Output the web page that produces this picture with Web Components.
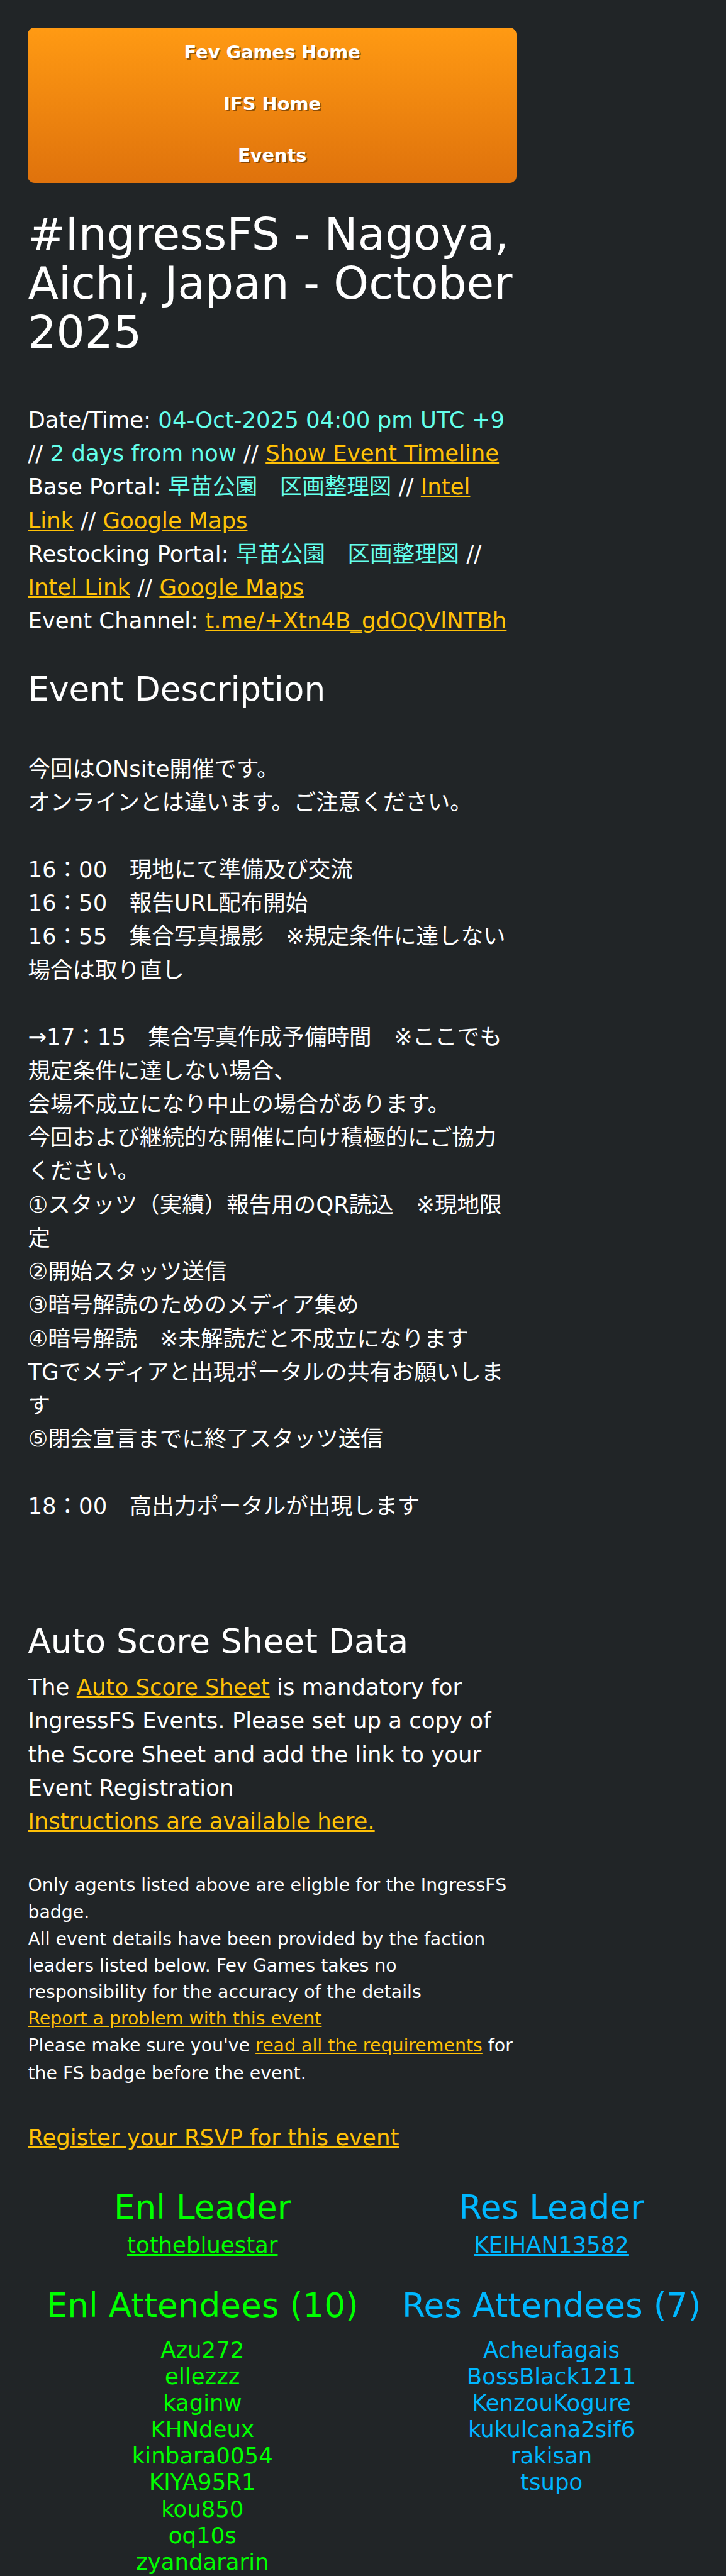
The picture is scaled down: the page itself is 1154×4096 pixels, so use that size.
<!DOCTYPE html>
<html lang="en">
<head>
<meta charset="utf-8">
<title>#IngressFS - Nagoya, Aichi, Japan - October 2025</title>
<style>

  /* 1rem is one layout unit: the page is 520 units wide */
  html {
    font-size: 2.2192px;
    background: #212527;
  }

  body {
    margin: 0;
    height: 4096px;
    overflow: hidden;
    color: #ffffff;
    background: #212527;
    font-family: "DejaVu Sans", "Noto Sans CJK JP", sans-serif;
  }

</style>
</head>
<body>

<event-page>

  <event-nav slot="nav">
    <nav-item>Fev Games Home</nav-item>
    <nav-item>IFS Home</nav-item>
    <nav-item>Events</nav-item>
  </event-nav>

  <event-title>#IngressFS - Nagoya,<br>Aichi, Japan - October<br>2025</event-title>

  <event-text class="details">
    Date/Time: <text-value>04-Oct-2025 04:00 pm UTC +9</text-value><br>
    // <text-value>2 days from now</text-value> // <text-link>Show Event Timeline</text-link><br>
    Base Portal: <text-value>早苗公園　区画整理図</text-value> // <text-link>Intel<br>Link</text-link> // <text-link>Google Maps</text-link><br>
    Restocking Portal: <text-value>早苗公園　区画整理図</text-value> //<br>
    <text-link>Intel Link</text-link> // <text-link>Google Maps</text-link><br>
    Event Channel: <text-link>t.me/+Xtn4B_gdOQVlNTBh</text-link>
  </event-text>

  <event-section heading="Event Description" class="description">
    <event-text>
      今回はONsite開催です。<br>
      オンラインとは違います。ご注意ください。<br>
      <br>
      16：00　現地にて準備及び交流<br>
      16：50　報告URL配布開始<br>
      16：55　集合写真撮影　※規定条件に達しない<br>場合は取り直し<br>
      <br>
      →17：15　集合写真作成予備時間　※ここでも<br>規定条件に達しない場合、<br>
      会場不成立になり中止の場合があります。<br>
      今回および継続的な開催に向け積極的にご協力<br>ください。<br>
      ①スタッツ（実績）報告用のQR読込　※現地限<br>定<br>
      ②開始スタッツ送信<br>
      ③暗号解読のためのメディア集め<br>
      ④暗号解読　※未解読だと不成立になります<br>
      TGでメディアと出現ポータルの共有お願いしま<br>す<br>
      ⑤閉会宣言までに終了スタッツ送信<br>
      <br>
      18：00　高出力ポータルが出現します
    </event-text>
  </event-section>

  <event-section heading="Auto Score Sheet Data" class="score">
    <event-text>
      The <text-link>Auto Score Sheet</text-link> is mandatory for<br>
      IngressFS Events. Please set up a copy of<br>
      the Score Sheet and add the link to your<br>
      Event Registration<br>
      <text-link>Instructions are available here.</text-link>
    </event-text>
  </event-section>

  <event-notes>
    <p>Only agents listed above are eligble for the IngressFS<br>badge.</p>
    <p>All event details have been provided by the faction<br>leaders listed below. Fev Games takes no<br>responsibility for the accuracy of the details</p>
    <p><text-link>Report a problem with this event</text-link></p>
    <p>Please make sure you've <text-link>read all the requirements</text-link> for<br>the FS badge before the event.</p>
  </event-notes>

  <event-text class="register"><text-link>Register your RSVP for this event</text-link></event-text>

  <faction-column slot="factions" faction="Enl" count="10" leader="tothebluestar"
    agents="Azu272 ellezzz kaginw KHNdeux kinbara0054 KIYA95R1 kou850 oq10s zyandararin"></faction-column>
  <faction-column slot="factions" faction="Res" count="7" leader="KEIHAN13582"
    agents="Acheufagais BossBlack1211 KenzouKogure kukulcana2sif6 rakisan tsupo"></faction-column>

</event-page>

<script>

class BaseElement extends HTMLElement {

  constructor () {

    super();

    this.attachShadow( { mode: 'open' } );

  }

  connectedCallback () {

    this.shadowRoot.innerHTML = this.render();

  }

}

class EventPage extends BaseElement {

  render () {

    return `
      <style>

        :host {
          display: flex;
          flex-direction: column;
          padding: 20rem 0 0 20rem;
        }

        main {
          width: 350rem;
          display: flex;
          flex-direction: column;
        }

        ::slotted( event-title ) { margin-top: 19.6rem; }
        ::slotted( .details ) { margin-top: 33.2rem; }
        ::slotted( .description ) { margin-top: 24rem; --gap: 31.8rem; }
        ::slotted( .score ) { margin-top: 71.8rem; --gap: 7.6rem; }
        ::slotted( event-notes ) { margin-top: 24rem; }
        ::slotted( .register ) { margin-top: 24.2rem; }

        .factions {
          width: 500rem;
          margin-top: 25rem;
          display: grid;
          grid-template-columns: 1fr 1fr;
        }

      </style>

      <main>
        <slot name="nav"></slot>
        <slot></slot>
      </main>
      <div class="factions"><slot name="factions"></slot></div>
    `;

  }

}

class EventNav extends BaseElement {

  render () {

    return `
      <style>

        :host {
          display: flex;
          flex-direction: column;
          height: 111rem;
          border-radius: 5rem;
          background: linear-gradient( to bottom, #ff9a13, #df720c );
        }

      </style>

      <slot></slot>
    `;

  }

}

class NavItem extends BaseElement {

  render () {

    return `
      <style>

        :host {
          flex: 1;
          box-sizing: border-box;
          padding-bottom: 2rem;
          display: flex;
          align-items: center;
          justify-content: center;
          font-size: 13rem;
          font-weight: 700;
          text-shadow: 1rem 1rem 0 rgba( 0, 0, 0, 0.42 );
        }

      </style>

      <slot></slot>
    `;

  }

}

class EventTitle extends BaseElement {

  render () {

    return `
      <style>

        :host { display: block; }

        h1 {
          margin: 0;
          font-size: 32rem;
          font-weight: 400;
          line-height: 35rem;
          white-space: nowrap;
        }

      </style>

      <h1><slot></slot></h1>
    `;

  }

}

class EventText extends BaseElement {

  render () {

    return `
      <style>

        :host {
          display: block;
          font-size: 16rem;
          line-height: 24rem;
          white-space: nowrap;
        }

      </style>

      <slot></slot>
    `;

  }

}

class EventNotes extends BaseElement {

  render () {

    return `
      <style>

        :host {
          display: flex;
          flex-direction: column;
          font-size: 12.8rem;
          line-height: 19rem;
          white-space: nowrap;
        }

        ::slotted( p ) { margin: 0; }

        ::slotted( p:first-child ),
        ::slotted( p:last-child ) { line-height: 19.6rem; }

      </style>

      <slot></slot>
    `;

  }

}

class EventSection extends BaseElement {

  render () {

    return `
      <style>

        :host {
          display: flex;
          flex-direction: column;
          gap: var( --gap );
        }

        h2 {
          margin: 0;
          font-size: 24rem;
          font-weight: 400;
          line-height: 26.4rem;
        }

      </style>

      <h2>${ this.getAttribute( 'heading' ) }</h2>
      <slot></slot>
    `;

  }

}

class TextLink extends BaseElement {

  render () {

    return `
      <style>

        :host {
          display: inline;
          color: #ffc107;
        }

        a {
          color: inherit;
          text-decoration: underline;
        }

      </style>

      <a href="#"><slot></slot></a>`;

  }

}

class TextValue extends BaseElement {

  render () {

    return `<style>:host { display: inline; color: #64ffeb; }</style><slot></slot>`;

  }

}

class FactionColumn extends BaseElement {

  render () {

    const faction = this.getAttribute( 'faction' );
    const agents = this.getAttribute( 'agents' ).split( ' ' );

    return `
      <style>

        :host {
          display: block;
          color: #00ff00;
          font-size: 16rem;
          line-height: 19rem;
          text-align: center;
        }

        :host( [ faction="Res" ] ) { color: #00b7ff; }

        h2 {
          margin: 0;
          font-size: 24rem;
          font-weight: 400;
          line-height: 26.4rem;
          white-space: nowrap;
        }

        a {
          display: block;
          margin: 4.3rem 0 20.5rem;
          color: inherit;
          text-decoration: underline;
        }

        ul {
          margin: 9.2rem 0 0;
          padding: 0;
          list-style-type: none;
        }

      </style>

      <h2>${ faction } Leader</h2>
      <a href="#">${ this.getAttribute( 'leader' ) }</a>
      <h2>${ faction } Attendees (${ this.getAttribute( 'count' ) })</h2>
      <ul>${ agents.map( agent => `<li>${ agent }</li>` ).join( '' ) }</ul>
    `;

  }

}

window.customElements.define( 'event-page', EventPage );
window.customElements.define( 'event-nav', EventNav );
window.customElements.define( 'nav-item', NavItem );
window.customElements.define( 'event-title', EventTitle );
window.customElements.define( 'event-text', EventText );
window.customElements.define( 'event-notes', EventNotes );
window.customElements.define( 'event-section', EventSection );
window.customElements.define( 'text-link', TextLink );
window.customElements.define( 'text-value', TextValue );
window.customElements.define( 'faction-column', FactionColumn );

</script>
</body>
</html>
